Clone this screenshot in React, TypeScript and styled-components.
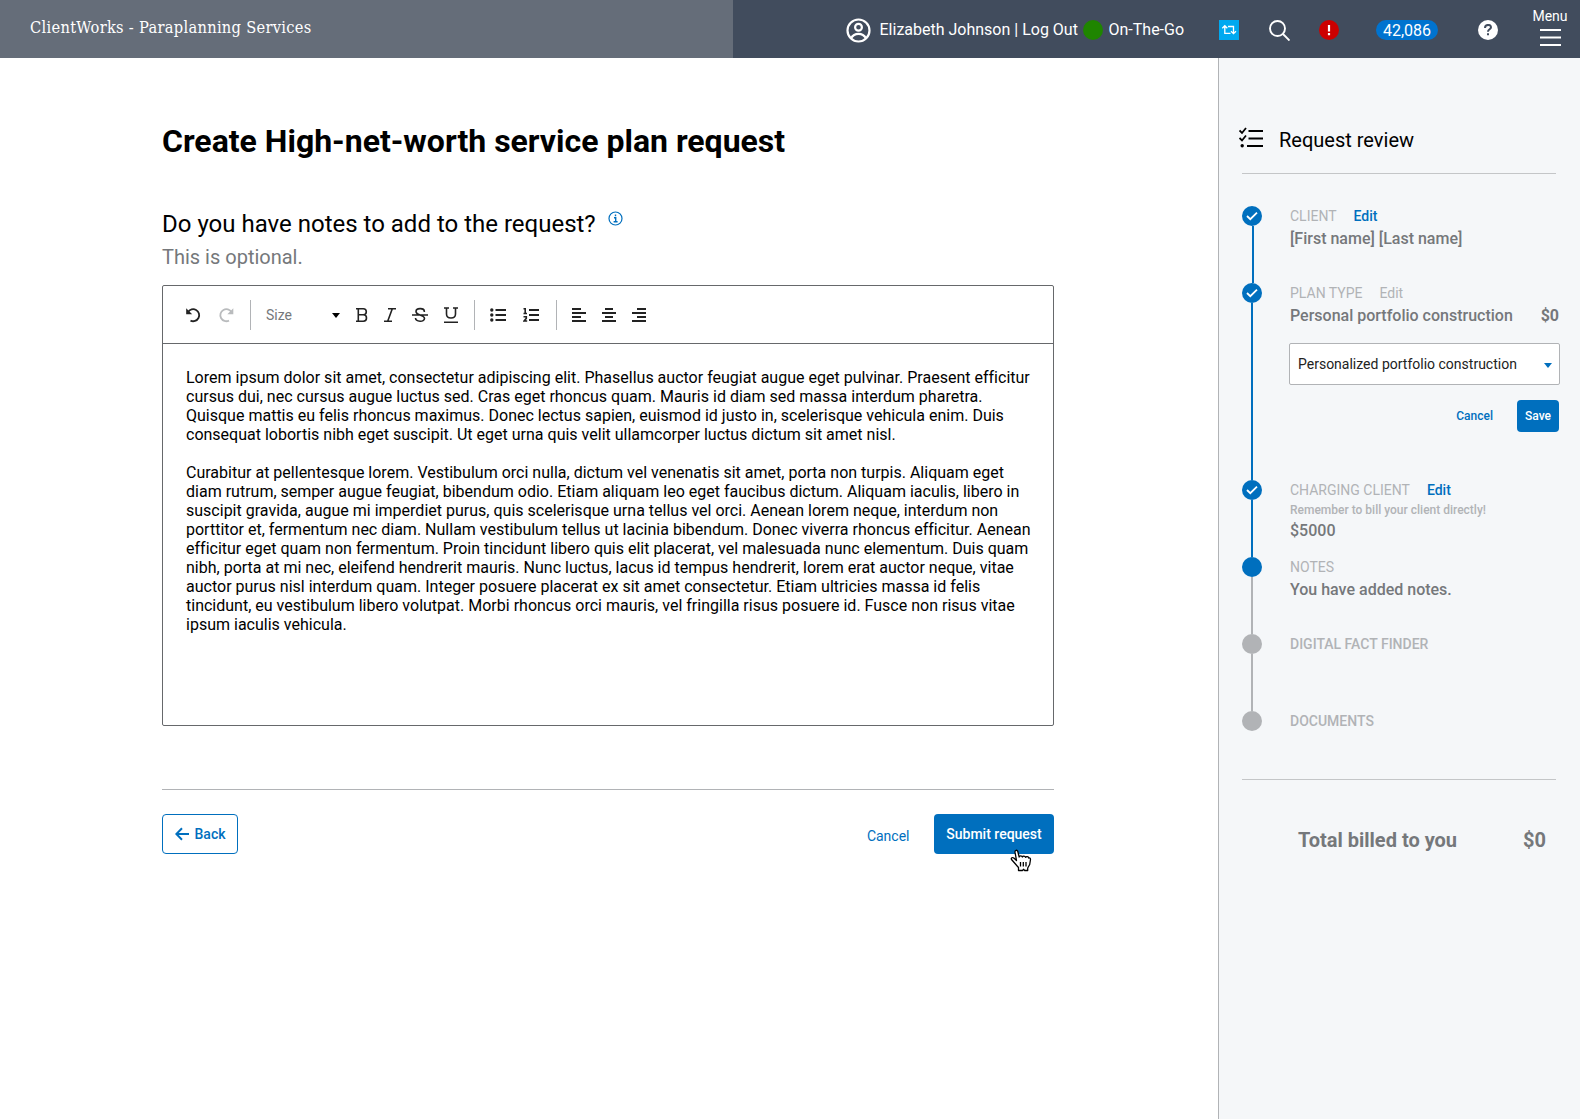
import React from 'react';
import styled, { createGlobalStyle, css } from 'styled-components';

const Global = createGlobalStyle`
  *, *::before, *::after { box-sizing: border-box; }
  body { margin: 0; background: #fff; font-family: Roboto, "Liberation Sans", sans-serif; color: #000; }
  h1, h2, h3, p { margin: 0; font-weight: 400; }
  button { font-family: inherit; margin: 0; padding: 0; border: 0; background: none; }
  svg { display: block; flex: none; }
`;

const BLUE = '#006fbe';
const GRAY = '#75787b';
const LIGHT = '#b1b3b6';

const Page = styled.div`
  display: flex;
  flex-direction: column;
  width: 1580px;
  height: 1119px;
  overflow: hidden;
`;

/* ---------- Header ---------- */
const Header = styled.header`
  display: flex;
  height: 58px;
  background: #414c5d;
  color: #fff;
`;
const Brand = styled.div`
  width: 733px;
  padding: 17px 0 0 30px;
  background: #656d79;
  font: 500 16.3px/22px "Roboto Slab", "DejaVu Serif", serif;
  font-stretch: condensed;
  letter-spacing: 0.29px;
  white-space: nowrap;
`;
const HeaderItems = styled.div`
  display: flex;
  align-items: center;
  height: 60px;
  padding-left: 113px;
  font-size: 16px;
  white-space: nowrap;
`;
const Account = styled.div`
  display: flex;
  align-items: center;
  width: 373px;
`;
const UserName = styled.span`
  width: 202px;
  margin: -1px 0 0 8.5px;
`;
const Presence = styled.span`
  width: 20px;
  height: 20px;
  margin: -1px 6px 0 1px;
  border-radius: 50%;
  background: #1f8500;
`;
const Status = styled.span`
  margin-top: -1px;
`;
const Badge = styled.span<{ $bg: string; $gap: number; $round?: boolean }>`
  display: grid;
  place-items: center;
  width: 20px;
  height: 20px;
  margin-right: ${p => p.$gap}px;
  border-radius: ${p => (p.$round ? '50%' : '0')};
  background: ${p => p.$bg};
  color: #fff;
`;
const SearchWrap = styled.span`
  margin-right: 29px;
`;
const CountPill = styled.span`
  width: 62px;
  height: 20px;
  margin-right: 40px;
  border-radius: 10px;
  background: #0073cf;
  line-height: 21px;
  text-align: center;
`;
const Menu = styled.div`
  display: flex;
  flex-direction: column;
  align-items: center;
  gap: 4px;
  width: 36px;
  height: 60px;
  padding-top: 8px;
  font-size: 14px;
  line-height: 17px;
`;

/* ---------- Main column ---------- */
const Body = styled.div`
  display: grid;
  grid-template-columns: 1218px 362px;
  flex: 1;
`;
const Main = styled.main`
  width: 1054px;
  padding: 64px 0 0 162px;
`;
const Title = styled.h1`
  font-size: 32px;
  line-height: 38px;
  font-weight: 700;
`;
const QuestionRow = styled.div`
  display: flex;
  gap: 12px;
  margin-top: 50px;
`;
const Question = styled.h2`
  font-size: 24px;
  line-height: 28px;
`;
const InfoMark = styled.span`
  padding-top: 1px;
`;
const Optional = styled.p`
  margin-top: 7px;
  color: ${GRAY};
  font-size: 20px;
  line-height: 24px;
`;
const Editor = styled.section`
  height: 441px;
  margin-top: 16px;
  border: 1px solid #66686b;
  border-radius: 2px;
`;
const Toolbar = styled.div`
  display: flex;
  align-items: center;
  height: 58px;
  padding: 0 0 0 22px;
  border-bottom: 1px solid #66686b;
`;
const Tool = styled.span<{ $w: number; $dim?: boolean }>`
  width: ${p => p.$w}px;
  color: ${p => (p.$dim ? '#b9bbbd' : '#222')};
`;
const ToolDivider = styled.span<{ $gap: number }>`
  width: 1px;
  height: 30px;
  margin-right: ${p => p.$gap}px;
  background: ${LIGHT};
`;
const SizeSelect = styled.span`
  display: flex;
  align-items: center;
  justify-content: space-between;
  width: 74px;
  margin-right: 15px;
  color: ${GRAY};
  font-size: 14px;
`;
const Caret = styled.i<{ $color: string; $half?: number }>`
  border: ${p => p.$half || 4}px solid transparent;
  border-top: 5px solid ${p => p.$color};
  border-bottom: 0;
  margin-top: 2px;
`;
const Notes = styled.p`
  padding: 24px 0 0 23px;
  font-size: 16px;
  line-height: 19px;
  letter-spacing: 0.006px;
  white-space: pre;
  & + & { padding-top: 19px; }
`;
const Actions = styled.footer`
  display: flex;
  align-items: center;
  margin-top: 63px;
  padding-top: 24px;
  border-top: 1px solid ${LIGHT};
`;
const Button = styled.button<{ $kind: 'solid' | 'outline' | 'text'; $small?: boolean }>`
  display: flex;
  align-items: center;
  justify-content: center;
  height: ${p => (p.$small ? 32 : 40)}px;
  border-radius: 4px;
  font-size: ${p => (p.$small ? 12 : 14)}px;
  font-weight: 500;
  white-space: nowrap;
  ${p => p.$kind === 'solid' && css`
    width: ${p.$small ? 42 : 120}px;
    background: ${BLUE};
    color: #fff;
  `}
  ${p => p.$kind === 'outline' && css`
    gap: 6px;
    width: 76px;
    border: 1px solid ${BLUE};
    color: ${BLUE};
  `}
  ${p => p.$kind === 'text' && css`
    margin-right: ${p.$small ? 24 : 24.5}px;
    color: ${BLUE};
    font-weight: ${p.$small ? 500 : 400};
    padding-top: ${p.$small ? 0 : 4}px;
  `}
`;
const Spacer = styled.span`
  flex: 1;
`;
const SubmitWrap = styled.div`
  position: relative;
`;
const Pointer = styled.svg`
  position: absolute;
  left: 76px;
  top: 35px;
`;

/* ---------- Review sidebar ---------- */
const Sidebar = styled.aside`
  padding: 67px 20px 0 23px;
  border-left: 1px solid ${LIGHT};
  background: #f5f7f9;
`;
const ReviewHead = styled.div`
  display: flex;
  align-items: center;
  gap: 16px;
  width: 314px;
  height: 49px;
  border-bottom: 1px solid #c4c6c8;
  padding-bottom: 19px;
`;
const ReviewIcon = styled.span`
  margin: -4px 0 0 -3px;
`;
const ReviewTitle = styled.h3`
  font-size: 20px;
  line-height: 24px;
`;
const Steps = styled.ol`
  display: flex;
  flex-direction: column;
  margin: 0;
  padding: 32px 0 0;
  list-style: none;
`;
const StepRow = styled.li<{ $h: number }>`
  display: flex;
  gap: 28px;
  height: ${p => p.$h}px;
`;
const Rail = styled.div<{ $line?: string; $shift?: number }>`
  display: flex;
  flex-direction: column;
  align-items: center;
  width: 20px;
  &::after {
    content: "";
    flex: 1;
    width: 2px;
    margin-left: ${p => p.$shift || 0}px;
    background: ${p => p.$line || 'transparent'};
  }
`;
const Dot = styled.span<{ $color: string }>`
  display: grid;
  place-items: center;
  width: 20px;
  height: 20px;
  border-radius: 50%;
  background: ${p => p.$color};
`;
const StepContent = styled.div`
  width: 269px;
  padding-top: 2px;
`;
const StepHead = styled.div`
  display: flex;
  gap: 17px;
  color: ${LIGHT};
  font-size: 14px;
  line-height: 16px;
  white-space: nowrap;
`;
const Label = styled.span<{ $bold?: boolean }>`
  font-weight: ${p => (p.$bold ? 500 : 400)};
`;
const Edit = styled.span<{ $off?: boolean }>`
  color: ${p => (p.$off ? LIGHT : BLUE)};
  font-weight: ${p => (p.$off ? 400 : 500)};
`;
const Hint = styled.p`
  margin-top: 5px;
  color: ${LIGHT};
  font-size: 12px;
  line-height: 14px;
  font-weight: 500;
`;
const Value = styled.p<{ $gap: number }>`
  display: flex;
  justify-content: space-between;
  margin-top: ${p => p.$gap}px;
  color: ${GRAY};
  font-size: 16px;
  line-height: 19px;
  font-weight: 500;
`;
const Amount = styled.span`
  font-weight: 700;
`;
const Select = styled.div`
  display: flex;
  align-items: center;
  justify-content: space-between;
  width: 271px;
  height: 42px;
  margin: 18px 0 15px -1px;
  padding: 0 7px 0 8px;
  border: 1px solid ${LIGHT};
  border-radius: 2px;
  background: #fff;
  color: #222;
  font-size: 14px;
`;
const SelectActions = styled.div`
  display: flex;
  justify-content: flex-end;
`;
const Total = styled.div`
  display: flex;
  justify-content: space-between;
  width: 314px;
  margin-top: 48px;
  padding: 48px 10px 0 56px;
  border-top: 1px solid #c4c6c8;
  color: ${GRAY};
  font-size: 20px;
  line-height: 24px;
  font-weight: 700;
`;

/* ---------- Icons ---------- */
type IconProps = { children: React.ReactNode; w?: number; h?: number; sw?: number };
const Icon = ({ children, w = 16, h = 16, sw = 1.6 }: IconProps) => (
  <svg width={w} height={h} viewBox={`0 0 ${w} ${h}`} fill="none" stroke="currentColor" strokeWidth={sw}>{children}</svg>
);
const UserIcon = () => (
  <Icon w={25} h={25} sw={2.2}>
    <circle cx="12.5" cy="12.5" r="11" />
    <circle cx="12.5" cy="9.3" r="3.4" />
    <path d="M5 20.3c2-3.6 4.500-4.500 7.500-4.500s5.500.9 7.500 4.500" />
  </Icon>
);
const CheckIcon = () => (
  <svg width="12" height="10" viewBox="0 0 12 10" fill="none" stroke="#fff" strokeWidth="1.8"><path d="M1 5l3.300 3.200L11 1.700" /></svg>
);
const ChecklistIcon = () => (
  <Icon w={24} h={21} sw={1.8}>
    <path d="M9.500 4H24M9.500 11.500H24M8 19H24M.5 3.500l2.500 2.500L7 1M.5 11l2.500 2.500L7 8.500" />
    <circle cx="3.200" cy="18.800" r="1.700" fill="currentColor" stroke="none" />
  </Icon>
);
const AlignIcon = ({ d }: { d: string }) => <Icon w={14} sw={1.8}><path d={d} /></Icon>;

/* ---------- Content ---------- */
const PARAGRAPHS = [
`Lorem ipsum dolor sit amet, consectetur adipiscing elit. Phasellus auctor feugiat augue eget pulvinar. Praesent efficitur
cursus dui, nec cursus augue luctus sed. Cras eget rhoncus quam. Mauris id diam sed massa interdum pharetra.
Quisque mattis eu felis rhoncus maximus. Donec lectus sapien, euismod id justo in, scelerisque vehicula enim. Duis
consequat lobortis nibh eget suscipit. Ut eget urna quis velit ullamcorper luctus dictum sit amet nisl.`,
`Curabitur at pellentesque lorem. Vestibulum orci nulla, dictum vel venenatis sit amet, porta non turpis. Aliquam eget
diam rutrum, semper augue feugiat, bibendum odio. Etiam aliquam leo eget faucibus dictum. Aliquam iaculis, libero in
suscipit gravida, augue mi imperdiet purus, quis scelerisque urna tellus vel orci. Aenean lorem neque, interdum non
porttitor et, fermentum nec diam. Nullam vestibulum tellus ut lacinia bibendum. Donec viverra rhoncus efficitur. Aenean
efficitur eget quam non fermentum. Proin tincidunt libero quis elit placerat, vel malesuada nunc elementum. Duis quam
nibh, porta at mi nec, eleifend hendrerit mauris. Nunc luctus, lacus id tempus hendrerit, lorem erat auctor neque, vitae
auctor purus nisl interdum quam. Integer posuere placerat ex sit amet consectetur. Etiam ultricies massa id felis
tincidunt, eu vestibulum libero volutpat. Morbi rhoncus orci mauris, vel fringilla risus posuere id. Fusce non risus vitae
ipsum iaculis vehicula.`,
];

type StepProps = {
  label: string; height: number; line?: string; shift?: number; dot?: string; done?: boolean;
  bold?: boolean; edit?: 'on' | 'off'; children?: React.ReactNode;
};
const Step = ({ label, height, line, shift, dot = BLUE, done, bold, edit, children }: StepProps) => (
  <StepRow $h={height}>
    <Rail $line={line} $shift={shift}><Dot $color={dot}>{done && <CheckIcon />}</Dot></Rail>
    <StepContent>
      <StepHead>
        <Label $bold={bold}>{label}</Label>
        {edit && <Edit $off={edit === 'off'}>Edit</Edit>}
      </StepHead>
      {children}
    </StepContent>
  </StepRow>
);

export default function App() {
  return (
    <Page>
      <Global />
      <Header>
        <Brand>ClientWorks - Paraplanning Services</Brand>
        <HeaderItems>
          <Account>
            <UserIcon />
            <UserName>Elizabeth Johnson | Log Out</UserName>
            <Presence />
            <Status>On-The-Go</Status>
          </Account>
          <Badge $bg="#00a9f0" $gap={30}>
            <Icon w={16} h={12} sw={1.3}>
              <path d="M3.800 2.500v6.800h5.700M1.300 4.200L3.800 1.700l2.500 2.500M7 2.500h5.500V9M10 7.200l2.500 2.500L15 7.200" />
            </Icon>
          </Badge>
          <SearchWrap>
            <Icon w={21} h={21} sw={1.9}><circle cx="8.500" cy="8.500" r="7.500" /><path d="M14 14l6.500 6.500" /></Icon>
          </SearchWrap>
          <Badge $bg="#cc0000" $gap={37} $round>
            <Icon w={4} h={12} sw={2.2}><path d="M2 1v6.500M2 9v2.200" /></Icon>
          </Badge>
          <CountPill>42,086</CountPill>
          <Badge $bg="#fff" $gap={34} $round>
            <svg width="10" height="12" viewBox="0 0 10 12" fill="none" stroke="#414c5d" strokeWidth="2">
              <path d="M2 4c0-4 6-4 6-.8C8 5.400 5 5.200 5 7.800M5 9.200v2" />
            </svg>
          </Badge>
          <Menu>
            Menu
            <Icon w={21} h={17} sw={2}><path d="M0 1h21M0 8.500h21M0 16h21" /></Icon>
          </Menu>
        </HeaderItems>
      </Header>

      <Body>
        <Main>
          <Title>Create High-net-worth service plan request</Title>
          <QuestionRow>
            <Question>Do you have notes to add to the request?</Question>
            <InfoMark>
              <svg width="15" height="15" viewBox="0 0 15 15" fill="none" stroke={BLUE} strokeWidth="1.200">
                <circle cx="7.500" cy="7.500" r="6.500" />
                <path d="M6 6.700h1.700v4M5.600 10.800h4M7.500 3.500v1.700" strokeWidth="1.400" />
              </svg>
            </InfoMark>
          </QuestionRow>
          <Optional>This is optional.</Optional>

          <Editor>
            <Toolbar>
              <Tool $w={33}>
                <Icon sw={1.8}><path d="M3 5.200A6 6 0 1 1 5.500 13.600" /><path d="M1.200 1.200v6h6z" fill="currentColor" stroke="none" /></Icon>
              </Tool>
              <Tool $w={32} $dim>
                <Icon sw={1.8}><path d="M13.500 5.200A6 6 0 1 0 11 13.600" /><path d="M15.300 1.200v6h-6z" fill="currentColor" stroke="none" /></Icon>
              </Tool>
              <ToolDivider $gap={15} />
              <SizeSelect>Size<Caret $color="#000" /></SizeSelect>
              <Tool $w={28}><Icon w={14}><path d="M1 1.800h7.300a3 3 0 0 1 0 6H3.500M8.300 7.800a3.200 3.200 0 0 1 0 6.400H1M3.300 1.800v12.400" /></Icon></Tool>
              <Tool $w={29}><Icon w={14}><path d="M5 1.800h8M1 14.200h8M9.300 1.800L4.700 14.200" /></Icon></Tool>
              <Tool $w={31}><Icon><path d="M12.300 5V4C12 .8 4 .8 4 4.500 4 6.500 6 7.300 8 8c2.500.8 4.500 1.500 4.500 3.500 0 3.800-8.800 3.500-9-.5M0 8h16" /></Icon></Tool>
              <Tool $w={31}><Icon><path d="M1 1h5M10 1h5M3.500 1v6c0 5.300 9 5.300 9 0V1M1 15.200h14" /></Icon></Tool>
              <ToolDivider $gap={15} />
              <Tool $w={33}>
                <Icon sw={1.8}>
                  <path d="M5.500 3H16M5.500 8H16M5.500 13H16" />
                  <path d="M1.800 3h0M1.800 8h0M1.800 13h0" strokeWidth="3.400" strokeLinecap="round" />
                </Icon>
              </Tool>
              <Tool $w={33}>
                <Icon sw={1.8}><path d="M6 3h10M6 8h10M6 13h10" /><path d="M.5 1.800H2.200V6.200M.5 6.500h3.500M.5 9.700h2.800v1.700L1 14h3.200" strokeWidth="1.600" /></Icon>
              </Tool>
              <ToolDivider $gap={15} />
              <Tool $w={30}><AlignIcon d="M0 2h9M0 6h14M0 10h9M0 14h14" /></Tool>
              <Tool $w={30}><AlignIcon d="M3 2h8M0 6h14M3 10h8M0 14h14" /></Tool>
              <Tool $w={14}><AlignIcon d="M5 2h9M0 6h14M5 10h9M0 14h14" /></Tool>
            </Toolbar>
            {PARAGRAPHS.map(text => <Notes key={text.slice(0, 9)}>{text}</Notes>)}
          </Editor>

          <Actions>
            <Button $kind="outline">
              <Icon w={14} h={14} sw={2}><path d="M14 7H1.500M7 1.200L1.300 7 7 12.800" /></Icon>
              Back
            </Button>
            <Spacer />
            <Button $kind="text">Cancel</Button>
            <SubmitWrap>
              <Button $kind="solid">Submit request</Button>
              <Pointer width="22" height="23" viewBox="0 0 22 23" fill="#fff" stroke="#000" strokeWidth="1.300" strokeLinejoin="round">
                <path d="M8.500 21.500v-3L5 14.500 1.500 10.500c-.8-1.500 1-2.500 2.300-1.500L6.500 11.500 5 3.200C4.700 1 7.200.5 7.800 2.500L9.200 8c.3-1.600 2.700-1.600 3.200 0 .4-1.300 2.600-1.200 3.200.3.600-1 2.800-.8 3.200.8.500-.6 1.700-.2 1.700 1.400l-.8 5-2 3.500v2.500h-3l-1-1.200-1.300 1.200z" />
                <path d="M10.500 13v4.500M13.300 13v4.500M16 13v4.500" />
              </Pointer>
            </SubmitWrap>
          </Actions>
        </Main>

        <Sidebar>
          <ReviewHead>
            <ReviewIcon><ChecklistIcon /></ReviewIcon>
            <ReviewTitle>Request review</ReviewTitle>
          </ReviewHead>
          <Steps>
            <Step label="CLIENT" height={77} line={BLUE} shift={2} done edit="on">
              <Value $gap={5}>[First name] [Last name]</Value>
            </Step>
            <Step label="PLAN TYPE" height={197} line={BLUE} done edit="off">
              <Value $gap={5}><span>Personal portfolio construction</span><Amount>$0</Amount></Value>
              <Select>Personalized portfolio construction<Caret $color={BLUE} $half={4.5} /></Select>
              <SelectActions>
                <Button $kind="text" $small>Cancel</Button>
                <Button $kind="solid" $small>Save</Button>
              </SelectActions>
            </Step>
            <Step label="CHARGING CLIENT" height={77} line={BLUE} done edit="on">
              <Hint>Remember to bill your client directly!</Hint>
              <Value $gap={4}>$5000</Value>
            </Step>
            <Step label="NOTES" height={77} line={LIGHT}>
              <Value $gap={5}>You have added notes.</Value>
            </Step>
            <Step label="DIGITAL FACT FINDER" height={77} line={LIGHT} dot={LIGHT} bold />
            <Step label="DOCUMENTS" height={20} dot={LIGHT} bold />
          </Steps>
          <Total><span>Total billed to you</span><span>$0</span></Total>
        </Sidebar>
      </Body>
    </Page>
  );
}
